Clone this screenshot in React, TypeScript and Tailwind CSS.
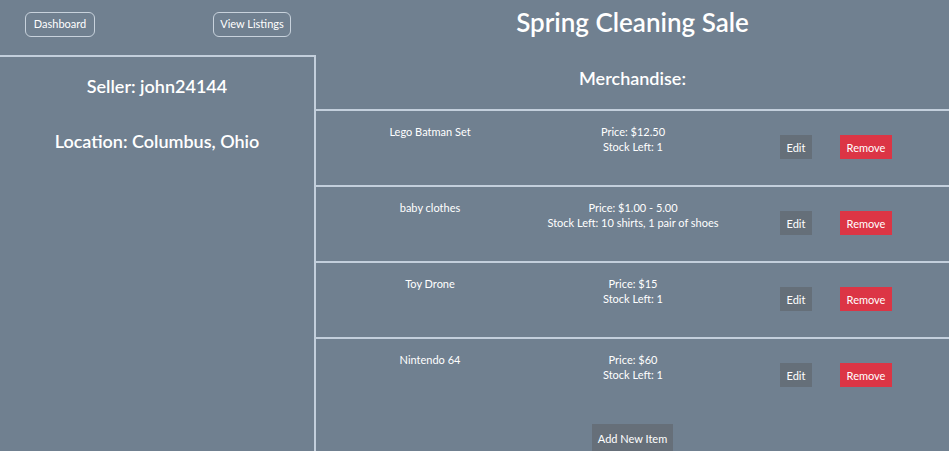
import React from "react";

interface Item {
  name: string;
  price: string;
  stock: string;
}

const items: Item[] = [
  { name: "Lego Batman Set", price: "Price: $12.50", stock: "Stock Left: 1" },
  { name: "baby clothes", price: "Price: $1.00 - 5.00", stock: "Stock Left: 10 shirts, 1 pair of shoes" },
  { name: "Toy Drone", price: "Price: $15", stock: "Stock Left: 1" },
  { name: "Nintendo 64", price: "Price: $60", stock: "Stock Left: 1" },
];

export default function App() {
  return (
    <div
      className="flex h-[451px] w-full overflow-hidden bg-[#708090] text-white"
      style={{ fontFamily: 'Lato, "Noto Sans", sans-serif' }}
    >
      {/* Left column */}
      <div className="flex w-[316px] shrink-0 flex-col">
        <div className="flex h-[55px] items-start justify-between px-[25px] pt-[12px]">
          <button className="h-[25px] w-[70px] rounded-md border border-[#c8d2dc] text-[11px]">
            Dashboard
          </button>
          <button className="h-[25px] w-[78px] rounded-md border border-[#c8d2dc] text-[11px]">
            View Listings
          </button>
        </div>
        <div className="flex-1 border-t-2 border-r-2 border-[#c3cfdc] pt-[17px] text-center">
          <h2 className="text-[18px] font-semibold leading-[24px]">Seller: john24144</h2>
          <h2 className="mt-[31px] text-[18px] font-semibold leading-[24px]">Location: Columbus, Ohio</h2>
        </div>
      </div>

      {/* Right column */}
      <div className="flex flex-1 flex-col">
        <h1 className="pt-[4px] text-center text-[26px] font-semibold leading-[36px]">Spring Cleaning Sale</h1>
        <h3 className="mt-[25px] text-center text-[18px] font-semibold leading-[26px]">Merchandise:</h3>
        <div className="mt-[18px]">
          {items.map((it) => (
            <div
              key={it.name}
              className="flex h-[76px] border-t-2 border-[#c3cfdc] pt-[13px] text-[11px] leading-[15px]"
            >
              <div className="w-[228px] shrink-0 text-center">{it.name}</div>
              <div className="w-[178px] shrink-0 whitespace-nowrap text-center">
                <div>{it.price}</div>
                <div>{it.stock}</div>
              </div>
              <div className="ml-[58px] pt-[11px]">
                <button className="h-[24px] w-[32px] bg-[#656f79] text-[11px]">Edit</button>
              </div>
              <div className="ml-[28px] pt-[11px]">
                <button className="h-[24px] w-[52px] bg-[#dc3545] text-[11px]">Remove</button>
              </div>
            </div>
          ))}
        </div>
        <div className="mt-[11px] flex justify-center">
          <button className="h-[30px] w-[81px] self-start bg-[#666f79] text-[11px] leading-[26px]">Add New Item</button>
        </div>
      </div>
    </div>
  );
}
